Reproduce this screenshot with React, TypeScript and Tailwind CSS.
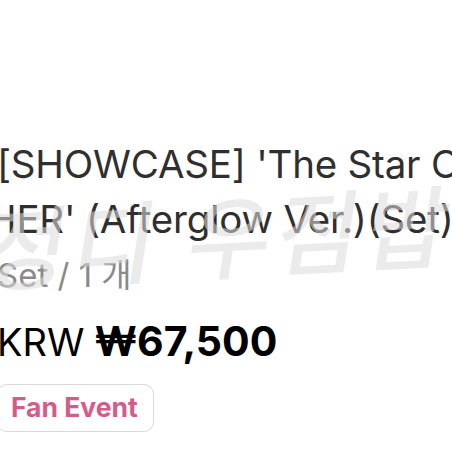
export default function App() {
  return (
    <div className="relative h-[452px] w-[452px] overflow-hidden bg-white font-['Inter','Noto_Sans_CJK_KR',sans-serif]">
      <div className="absolute left-[-3px] top-[137px] w-[560px]">
        <div className="text-[38.5px] leading-[55px] tracking-[-0.2px] text-[#2f2f2f] whitespace-nowrap">
          <div>[SHOWCASE] 'The Star C</div>
          <div className="ml-[-9px]">HER' (Afterglow Ver.)(Set)</div>
        </div>
        <div className="mt-[10px] text-[33px] leading-[36px] text-[#8a8a8a] whitespace-nowrap">
          Set / 1 개
        </div>
        <div className="mt-[25px] flex items-baseline gap-[10px] whitespace-nowrap text-black">
          <span className="text-[38px] leading-[46px]">KRW</span>
          <span className="text-[41px] font-bold leading-[46px]">₩67,500</span>
        </div>
        <div className="mt-[19px] inline-flex h-[48px] items-center rounded-[10px] border border-[#d9d9d9] pl-[13px] pr-[15px]">
          <span className="text-[26.5px] font-bold text-[#d45c8a]">Fan Event</span>
        </div>
      </div>
      <div className="pointer-events-none absolute left-[-14px] top-[188px] -rotate-3 -skew-x-12 whitespace-nowrap text-[90px] font-medium leading-none tracking-[6px] text-[#dcdcdc] opacity-55 font-['Noto_Sans_CJK_KR',sans-serif]">
        정디 우점밥
      </div>
    </div>
  )
}
